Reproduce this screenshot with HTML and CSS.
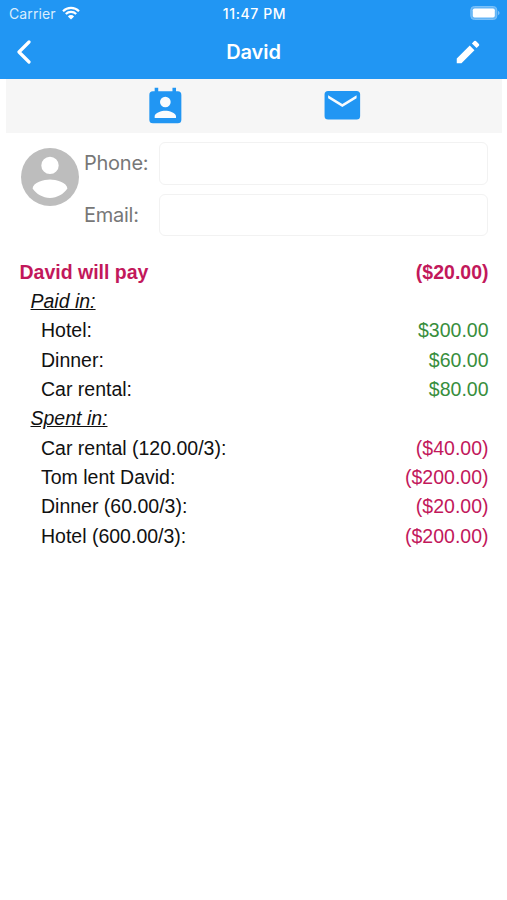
FILE: index.html
```html
<!DOCTYPE html>
<html lang="en">
<head>
<meta charset="utf-8">
<title>David</title>
<link rel="stylesheet" href="styles.css">
</head>
<body>
<header class="header">
  <div class="status">
    <div class="carrier"><span>Carrier</span>
      <svg class="wifi" viewBox="0 0 18 14"><path d="M1 5.2a11.5 11.5 0 0 1 16 0" /><path d="M3.800 8a7.500 7.500 0 0 1 10.400 0"/><path class="dot" d="M9 13.500 5.900 10.400a4.400 4.400 0 0 1 6.200 0z"/></svg>
    </div>
    <div class="time">11:47 PM</div>
    <svg class="battery" viewBox="0 0 30 14"><rect class="shell" x=".8" y=".5" width="26" height="13" rx="3.5"/><rect class="charge" x="2.8" y="2.4" width="22" height="9.2" rx="1.8"/><path class="tip" d="M28 5c2 .6 2 3.400 0 4z"/></svg>
  </div>
  <nav class="nav">
    <svg class="back" viewBox="0 0 16 24"><path d="M13 2 3 12l10 10"/></svg>
    <h1 class="title">David</h1>
    <svg class="edit" viewBox="0 0 24 24"><path d="M3 17.250V21h3.750L17.150 10.600l-3.750-3.750L3 17.250zM20.710 7.040a1 1 0 0 0 0-1.410l-2.340-2.340a1 1 0 0 0-1.410 0l-1.830 1.830 3.750 3.750 1.830-1.830z"/></svg>
  </nav>
</header>
<main>
  <div class="toolbar">
    <svg class="tool contact" viewBox="0 0 24 24"><path d="M19 3h-1V1h-2v2H8V1H6v2H5a2 2 0 0 0-2 2v14a2 2 0 0 0 2 2h14a2 2 0 0 0 2-2V5a2 2 0 0 0-2-2z"/><path class="hole" d="M12 6a3 3 0 1 1 0 6 3 3 0 0 1 0-6zm6 12H6v-1c0-2 4-3.100 6-3.100s6 1.100 6 3.100z"/></svg>
    <svg class="tool mail" viewBox="0 0 24 24"><path d="M20 4H4a2 2 0 0 0-2 2v12a2 2 0 0 0 2 2h16a2 2 0 0 0 2-2V6a2 2 0 0 0-2-2z"/><path class="hole" d="m20 8-8 5-8-5V6.300l8 5 8-5z"/></svg>
  </div>
  <section class="profile">
    <svg class="avatar" viewBox="2 2 20 20"><circle cx="12" cy="12" r="10"/><path class="hole" d="M12 5a3 3 0 1 1 0 6 3 3 0 0 1 0-6zm0 14.200c-2.500 0-4.710-1.280-6-3.220.03-1.990 4-3.080 6-3.080 1.990 0 5.970 1.090 6 3.080-1.290 1.940-3.500 3.220-6 3.220z"/></svg>
    <div class="fields">
      <label class="field"><span class="label">Phone:</span><input class="input" type="text"></label>
      <label class="field"><span class="label">Email:</span><input class="input" type="text"></label>
    </div>
  </section>
  <section class="ledger">
    <div class="row total"><span>David will pay</span><span>($20.00)</span></div>
    <div class="row group"><span>Paid in:</span></div>
    <div class="row item paid"><span>Hotel:</span><span class="amount">$300.00</span></div>
    <div class="row item paid"><span>Dinner:</span><span class="amount">$60.00</span></div>
    <div class="row item paid"><span>Car rental:</span><span class="amount">$80.00</span></div>
    <div class="row group"><span>Spent in:</span></div>
    <div class="row item spent"><span>Car rental (120.00/3):</span><span class="amount">($40.00)</span></div>
    <div class="row item spent"><span>Tom lent David:</span><span class="amount">($200.00)</span></div>
    <div class="row item spent"><span>Dinner (60.00/3):</span><span class="amount">($20.00)</span></div>
    <div class="row item spent"><span>Hotel (600.00/3):</span><span class="amount">($200.00)</span></div>
  </section>
</main>
</body>
</html>
```
FILE: styles.css
```css
* { box-sizing: border-box; }
body { margin: 0; min-height: 900px; background: #fff; font-family: Inter, "Liberation Sans", sans-serif; }
svg { display: block; flex: none; }
.header { height: 79px; background: #2196f3; color: #fff; }
.status { height: 27px; display: grid; grid-template-columns: 1fr auto 1fr; align-items: center; padding: 0 7px 0 9px; line-height: 16px; }
.carrier { display: flex; align-items: center; gap: 6px; font-size: 14px; letter-spacing: .1px; color: #d9edfd; }
.wifi { width: 18px; height: 14px; margin-top: -1px; fill: none; stroke: #fff; stroke-width: 2.2; }
.wifi .dot { fill: #fff; stroke: none; }
.time { font-size: 14px; font-weight: 500; letter-spacing: .6px; }
.battery { width: 30px; height: 14px; margin-top: -1px; justify-self: end; }
.shell { fill: #64b5f6; stroke: #7cc1f8; }
.charge { fill: #fff; }
.tip { fill: #7cc1f8; }
.nav { height: 50px; display: grid; grid-template-columns: 1fr auto 1fr; align-items: center; padding: 0 16px; }
.back { width: 16px; height: 24px; fill: none; stroke: #fff; stroke-width: 3.2; stroke-linecap: round; stroke-linejoin: round; }
.title { margin: 0; font-size: 20px; line-height: 26px; font-weight: 600; letter-spacing: -.1px; }
.edit { width: 30px; height: 30px; margin-right: 8px; justify-self: end; fill: #fff; }
.toolbar { margin: 0 5px 0 6px; height: 54px; background: #f6f6f6; display: flex; padding: 5px 0 0 138px; gap: 134px; }
.tool { width: 42.700px; height: 42.700px; fill: #2196f3; }
.contact { margin-top: 2px; }
.tool .hole { fill: #f8fbfd; }
.profile { display: flex; padding: 9px 19px 0 21px; }
.avatar { width: 58px; height: 58px; margin-top: 6px; fill: #bdbdbd; }
.avatar .hole { fill: #fff; }
.fields { flex: 1; display: grid; gap: 9px; margin-left: 5px; }
.field { display: flex; height: 42.500px; }
.label { width: 75px; font-size: 20px; line-height: 42px; letter-spacing: -.25px; color: #777; }
.input { flex: 1; min-width: 0; border: 1px solid #f2f2f2; border-radius: 6px; background: #fff; padding: 0 10px; font: inherit; }
.ledger { margin-top: 21.700px; padding: 0 18.500px 0 19.500px; font: 19.500px/29.330px "Liberation Sans", sans-serif; color: #111; }
.row { display: flex; justify-content: space-between; height: 29.330px; }
.total { font-weight: 700; color: #c2185b; }
.group { padding-left: 11px; font-style: italic; text-decoration: underline; }
.item { padding-left: 21.500px; }
.paid .amount { color: #388e3c; }
.spent .amount { color: #c2185b; }
```
